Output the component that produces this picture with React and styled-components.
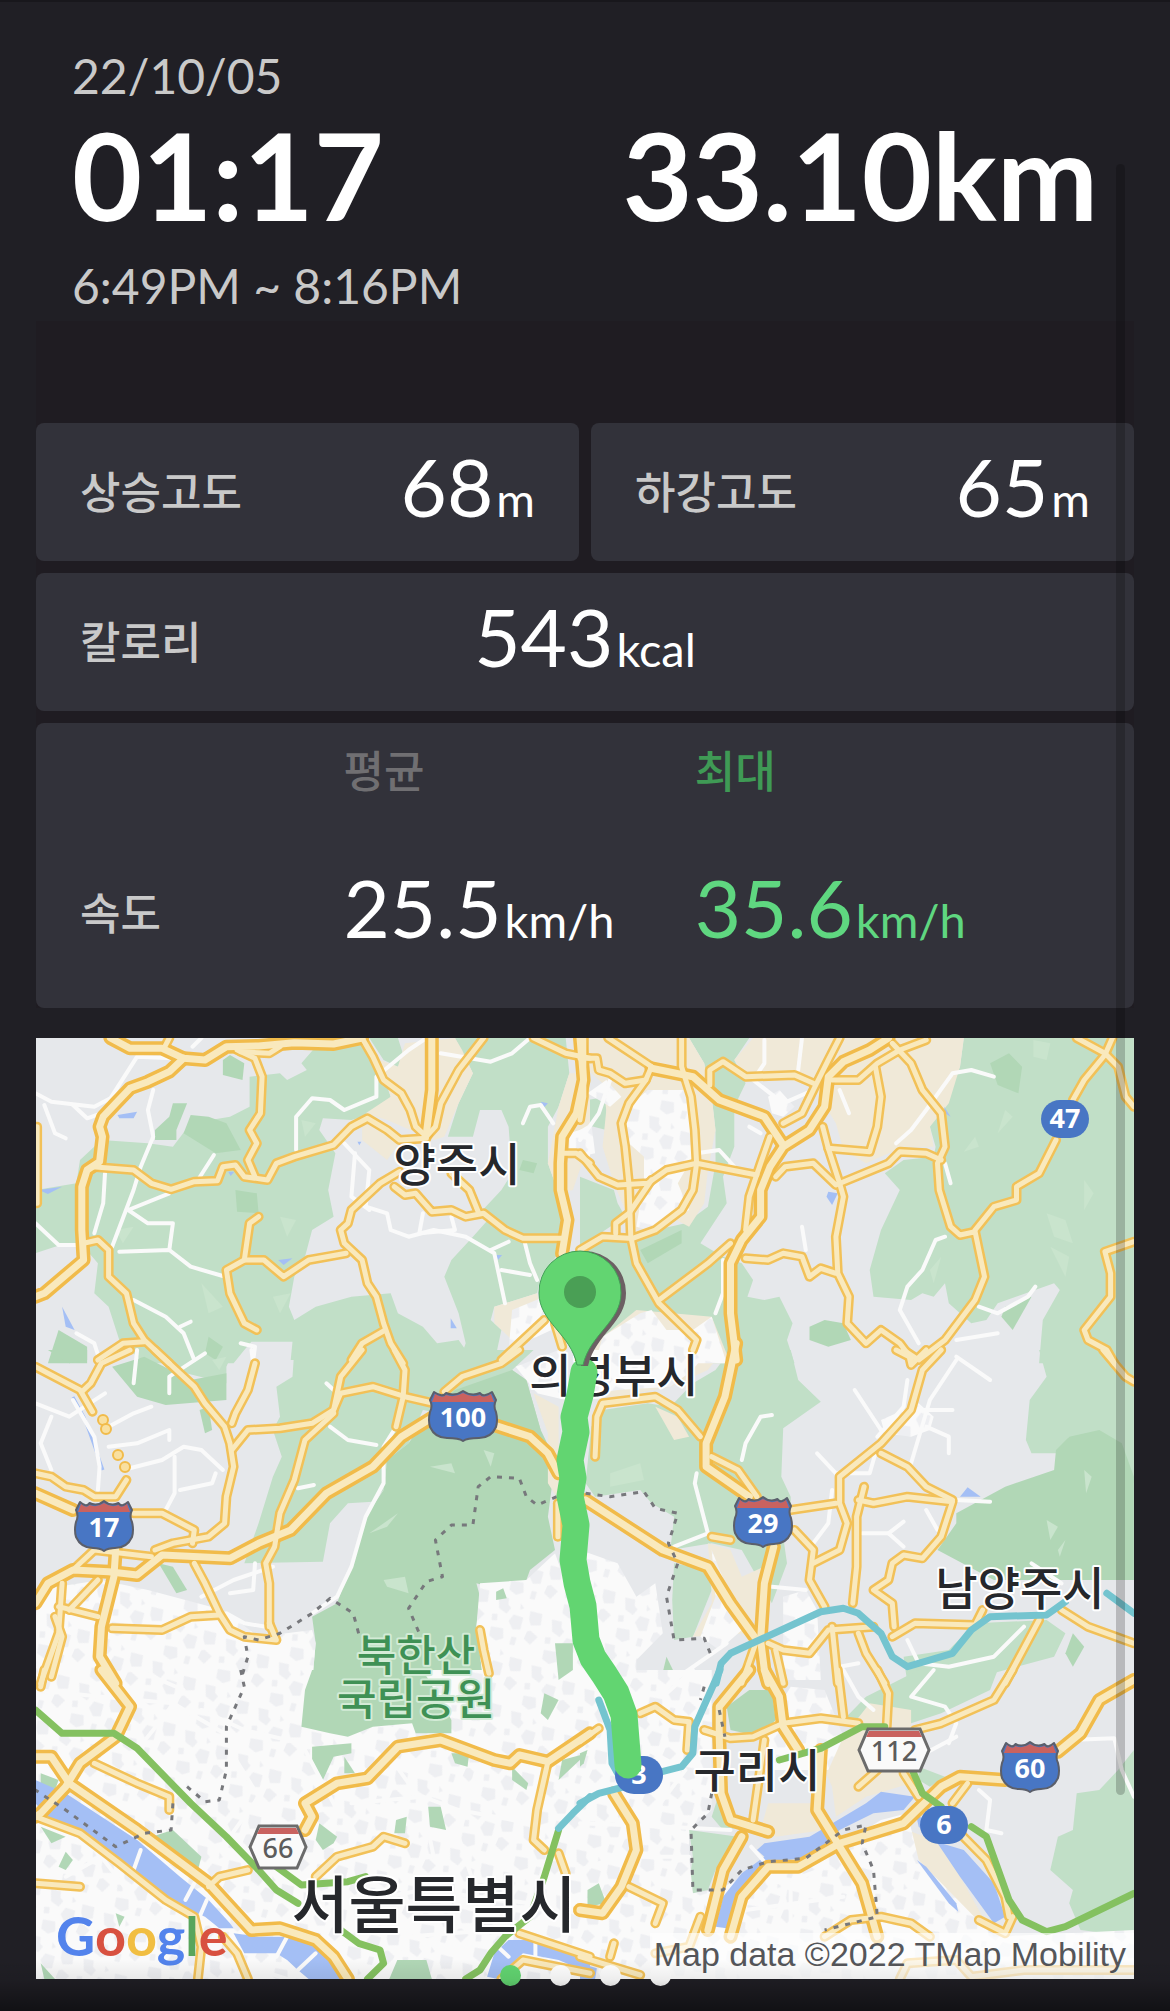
import React from "react";
import styled, { createGlobalStyle } from "styled-components";

const GlobalStyle = createGlobalStyle`
  body {
    margin: 0;
    background: #201f25;
    font-family: "Lato", "Noto Sans CJK KR", sans-serif;
  }
`;

const elevations = [
  { label: "상승고도", value: "68", unit: "m" },
  { label: "하강고도", value: "65", unit: "m" },
];

const pages = [1, 2, 3, 4];

// The map is drawn in six sheets, each with its own origin and scale.
const sheets = {
  nw: [30, 1030, 2.8, 3],
  ne: [580, 1030, 2.6576, 3],
  w: [30, 1350, 2.8, 3],
  e: [580, 1350, 2.6576, 3],
  sw: [30, 1670, 2.8, 3],
  se: [580, 1670, 2.6576, 3],
};

const project = (sheet, points) => {
  const [ox, oy, sx, sy] = sheets[sheet];
  return points
    .split(" ")
    .map((pair) => {
      const [x, y] = pair.split(",");
      return `${(ox + x / sx).toFixed(1)},${(oy + y / sy).toFixed(1)}`;
    })
    .join(" ");
};

const shapes = (layer) =>
  Object.keys(layer).flatMap((sheet) => layer[sheet].map((points) => project(sheet, points)));

const woods = shapes({
  nw: [
    "760,100 800,50 940,40 960,110 1000,170 1010,200 990,230 930,260 900,270 820,265 810,300 855,370 835,480 850,560 790,600 770,680 740,740 725,830 740,870 800,830 900,800 1010,790 1030,850 1100,890 1140,940 1200,930 1220,960 1210,990 730,990 735,935 620,935 600,960 570,1000 400,1000 320,1000 250,930 220,830 180,790 190,700 150,650 100,640 15,670 15,480 130,460 140,390 200,330 330,340 400,350 450,280 560,260 615,230 615,140 700,130 720,150 775,120",
    "950,24 1030,24 1050,90 1030,110 990,90",
    "1190,24 1500,24 1510,130 1480,230 1450,290 1450,400 1480,490 1490,620 1380,620 1290,560 1250,560 1320,480 1350,430 1340,290 1320,240 1260,240 1240,320 1170,320 1200,220 1240,130",
    "1240,620 1290,560 1400,630 1480,640 1480,670 1430,740 1420,790 1300,830 1290,870 1320,900 1300,1000 1200,1000 1220,940 1200,850 1160,740 1180,690",
  ],
  ne: [
    "290,24 450,24 410,90 440,160 410,230 410,350 380,440 390,520 320,640 380,680 430,700 460,750 445,800 490,810 530,800 565,880 550,930 570,1000 0,1000 0,640 80,610 140,640 200,600 280,580 340,530 360,400 360,300 350,200 330,100",
    "0,440 90,480 100,520 120,560 0,650",
    "20,210 70,200 70,300 0,280",
    "1020,24 1472,24 1472,1000 1220,1000 1230,870 1275,780 1260,760 1110,820 1080,870 1040,880 980,820 970,760 940,800 910,790 880,810 780,800 770,720 800,600 850,480 810,430 860,390 940,380 945,350 930,290 960,220 1010,110",
  ],
  w: [
    "740,0 1410,0 1350,60 1390,90 1430,240 1300,220 1100,180 1060,280 1000,330 990,420 960,455 890,460 840,520 820,635 600,640 640,520 680,380 705,320 680,240 700,200 690,110 735,80",
    "320,0 570,0 550,50 550,100 400,60",
  ],
  e: [
    "60,180 180,160 240,170 300,100 360,60 400,0 560,0 580,90 640,155 540,235 535,380 560,440 560,470 540,560 550,640 510,760 480,700 430,600 350,580 240,600 250,500 190,460 160,420 40,440 15,400 30,230",
    "250,640 340,660 350,720 300,860 250,870 245,750",
    "1220,0 1472,0 1472,400 1300,260 1270,310 1200,310 1185,270 1195,150 1240,80",
    "860,920 980,900 1050,820 1240,810 1290,850 1260,920 1000,1000 870,1000",
  ],
  se: [
    "700,150 760,80 900,0 1110,0 1090,60 960,130 880,160 830,110 740,150",
    "290,480 420,500 360,600 340,660 300,670 290,640 300,560",
    "1320,370 1380,360 1430,300 1472,240 1472,800 1330,780 1300,700 1310,660 1250,600 1270,500 1310,480",
    "370,370 390,420 440,470 380,480 350,440",
    "900,290 970,320 930,350 900,330",
  ],
});

const parks = shapes({
  nw: [
    "350,300 390,260 400,220 440,220 410,300 410,330 350,330",
    "450,255 500,260 550,280 590,360 520,370 430,310",
    "540,90 560,75 600,100 595,150 540,135",
    "575,480 635,490 640,550 580,545",
    "80,900 160,950 160,1000 50,1000",
    "500,920 540,950 520,990 490,970",
    "1380,390 1420,400 1410,430 1370,420",
  ],
  ne: [
    "1090,100 1140,70 1175,110 1165,190 1110,165",
    "160,660 270,600 270,640 180,700",
    "610,890 650,870 700,880 720,930 660,950 610,930",
    "1130,830 1200,800 1150,900 1120,860",
  ],
  w: [
    "1430,240 1480,350 1460,420 1450,500 1470,600 1400,660 1390,690 1320,720 1250,700 1260,740 1250,830 1270,1000 790,1000 800,880 790,800 860,760 900,640 920,560 940,500 990,420 1000,330 1060,280 1110,200 1190,120 1350,60 1390,90",
    "230,50 320,20 450,90 550,70 550,150 380,165 300,140",
    "50,0 160,0 160,30 110,40",
    "475,180 500,170 510,240 490,250",
    "360,640 400,650 440,720 410,730",
    "250,700 310,760 270,820 230,830",
  ],
  e: [
    "1300,260 1380,240 1440,280 1472,380 1472,690 1400,690 1100,690 950,600 1000,520 1000,490 1130,410 1260,360 1265,300",
    "1310,850 1340,890 1310,950 1290,910",
    "230,920 260,990 215,990",
  ],
});

const clearings = shapes({
  nw: ["760,270 800,280 770,320", "700,560 745,570 720,620", "480,760 540,830 500,850", "680,800 730,790 700,850", "240,600 290,590 260,640"],
  ne: [
    "1205,30 1250,40 1240,90 1205,80",
    "1130,240 1150,260 1110,310",
    "1050,320 1060,350 1020,365",
    "1240,550 1290,570 1310,640 1260,620",
    "1250,650 1300,680 1290,740",
    "930,720 960,680 940,760",
    "1340,450 1365,490 1340,540",
  ],
  w: [
    "1120,350 1180,340 1190,370",
    "1270,300 1300,310 1290,350",
    "990,690 1050,680 1060,730 1000,710",
    "950,550 1030,490 1000,530",
    "510,30 550,20 530,60",
  ],
  e: ["80,370 160,340 170,390 80,410", "1240,510 1270,530 1250,570", "1340,360 1360,380 1345,430", "1270,600 1290,570 1275,620"],
});

const suburbs = shapes({
  nw: [
    "980,90 1030,110 1050,40 1190,24 1210,60 1240,130 1200,220 1160,320 1130,330 1000,270 940,250 1010,200",
    "1000,390 930,330 930,280 1000,300 1040,330",
    "1510,130 1568,130 1568,330 1520,480 1480,490 1450,400 1480,230",
    "1300,830 1420,790 1430,830 1350,930 1300,880",
  ],
  ne: [
    "0,24 290,24 330,100 350,200 360,300 340,420 330,520 290,590 240,560 150,600 120,540 90,460 60,350 70,240 60,160 0,100",
    "460,24 1020,24 1010,110 980,220 930,290 940,350 860,350 760,400 700,360 680,280 620,170 560,150 450,150 410,90",
    "40,940 150,840 350,860 400,1000 30,1000",
  ],
  w: ["1410,130 1480,170 1480,450 1450,400 1450,250"],
  e: [
    "0,0 380,0 340,60 240,110 100,140 40,140",
    "200,170 260,200 290,260 250,270",
    "340,580 400,600 430,680 510,640 490,760 440,850 300,860 350,760 350,720",
  ],
  se: [
    "700,200 770,100 880,120 880,340 760,380 680,440 670,350 650,300",
    "500,400 640,400 650,480 520,500 480,480",
    "870,480 960,520 1080,760 1000,730 900,570",
  ],
});

const blocks = shapes({
  nw: ["1510,310 1568,290 1568,380 1510,370", "1350,840 1440,800 1460,900 1340,960"],
  ne: [
    "180,180 290,180 300,380 260,460 290,540 180,600 150,590 170,450 170,380 130,340 120,240",
    "60,920 160,850 190,840 230,900 300,900 350,860 390,1000 40,1000",
    "0,300 30,280 40,370 0,380",
    "20,190 70,150 110,200 80,230",
    "500,200 530,180 570,230 540,260 510,250",
  ],
  w: [
    "15,720 200,690 330,720 540,780 640,860 790,840 800,880 790,1000 15,1000",
    "1260,700 1390,690 1470,610 1500,700 1568,880 1568,1000 1270,1000 1250,830",
    "1360,50 1480,0 1500,0 1500,150 1420,130",
  ],
  e: [
    "0,0 340,0 300,60 240,110 100,120 0,140",
    "0,600 100,640 150,740 200,700 220,850 150,930 150,1000 0,1000",
    "350,600 400,740 440,830 370,900 320,860 340,800 360,740",
    "540,740 600,720 630,780 640,990 540,990",
    "800,210 860,180 900,160 940,200 930,240 880,260 810,250",
  ],
  sw: ["15,0 1568,0 1568,927 15,927"],
  se: [
    "0,0 350,0 350,420 290,480 290,560 300,670 360,660 500,590 700,520 800,450 870,430 900,570 1100,800 1472,780 1472,927 0,927",
    "560,50 650,60 700,200 660,300 480,300 480,200",
  ],
});

const cityParks = shapes({
  w: ["1470,880 1520,880 1520,960 1480,990", "1305,725 1325,715 1335,745 1305,750"],
  sw: [
    "790,0 1100,0 1180,150 1180,190 1080,190 1070,160 960,170 890,200 840,190 760,170 770,60",
    "790,230 900,220 900,250 850,260 820,330 790,290",
    "880,260 910,310 880,310",
    "810,460 860,500 850,520 820,540 800,510",
    "1025,450 1055,440 1050,490 1020,490",
    "1115,410 1150,410 1165,480 1120,470",
    "1180,250 1230,250 1225,290 1190,280",
    "1350,290 1395,340 1390,360 1350,330",
    "1490,270 1560,250 1480,330",
    "1440,70 1480,90 1450,150 1430,130",
    "30,310 80,330 70,360 30,340",
    "30,470 100,500 60,520",
    "340,500 400,480 480,560 470,600 400,570",
    "1020,870 1110,870 1125,927 1000,927",
    "100,545 120,570 100,600 80,590",
    "240,730 265,740 250,770",
    "30,880 70,927 40,927",
  ],
  se: [
    "390,110 450,60 510,60 520,150 480,200 400,180",
    "20,660 50,640 70,700 20,710",
    "0,250 20,240 10,280 0,290",
  ],
});

const water = shapes({
  nw: [
    "245,255 300,245 290,265 250,265",
    "90,830 125,900 100,890",
    "695,690 735,685 710,705",
    "25,480 90,470 50,492",
    "1178,865 1195,895 1178,895",
    "1430,215 1450,220 1440,232",
    "1305,675 1322,675 1310,690",
    "555,425 572,425 562,438",
    "917,335 928,335 922,346",
  ],
  ne: ["660,485 685,490 670,525 655,500", "968,230 985,260 970,250"],
  e: ["1010,440 1030,412 1065,440"],
  sw: [
    "15,330 100,370 300,510 420,620 500,690 560,760 570,775 530,775 490,740 380,690 280,600 200,530 120,480 50,440 15,400",
    "570,790 640,800 720,800 780,810 850,870 870,927 780,927 750,900 720,870 690,850 600,850",
    "1340,810 1390,810 1568,870 1568,910 1480,870 1380,850 1310,927 1280,920 1300,850",
  ],
  se: [
    "360,770 380,680 430,610 490,560 470,540 490,520 610,500 700,440 760,400 800,365 890,380 860,420 780,430 690,480 640,540 600,565 500,575 450,640 410,700 390,775",
    "890,420 960,520 1020,540 1100,640 1130,740 1100,760 1010,620 950,520 900,470",
    "895,570 920,590 1000,700 1005,725 980,700",
    "0,880 45,895 40,927 0,927",
  ],
});

const lanes = shapes({
  nw: [
    "15,190 60,215 180,230 225,205 300,80 400,85",
    "40,225 70,310 100,325",
    "120,225 160,265 200,250",
    "345,180 330,240 345,320 310,410 290,480 230,650",
    "210,430 205,520 180,610",
    "390,490 275,540 330,580 400,580 390,660",
    "250,665 390,660 450,710 540,738",
    "15,580 80,645 150,645",
    "290,810 380,860 430,910 460,990",
    "450,875 420,890",
    "745,360 745,260 790,205 840,210 880,240 970,200 970,140 1060,60 1110,24",
    "470,450 515,375",
    "880,340 950,420 940,530 1000,550 1010,600 1060,620 1130,600 1220,620 1300,670 1330,820",
    "910,370 900,500 950,540",
    "1100,550 1090,610 1190,600 1180,560",
    "1150,70 1290,95 1350,70 1400,24",
    "1380,280 1400,230 1430,225 1465,280",
    "1290,660 1340,635",
    "1385,635 1400,700 1420,750",
    "1320,720 1400,735",
    "130,910 180,940 195,990",
    "455,50 480,24",
    "590,940 630,950 625,990",
  ],
  ne: [
    "490,30 490,100 460,150 540,220 620,180",
    "590,24 580,120",
    "1100,140 1040,120 990,130 920,240 880,300 840,340",
    "450,290 480,310",
    "970,620 945,630 910,720 870,770 850,840 900,940",
    "380,690 380,790 360,850",
    "970,400 985,460",
    "590,590 600,660",
    "690,180 715,250",
    "310,370 370,360 410,410",
    "1060,830 1110,850 1190,800 1210,770",
    "1000,930 1110,910",
    "0,330 50,250 80,150",
  ],
  w: [
    "15,160 110,200 210,130",
    "60,200 30,280 60,360",
    "120,150 180,260 195,350 190,420",
    "220,230 290,190 340,170",
    "220,290 300,280 390,240 390,270",
    "260,360 370,330 430,290 480,300 540,360",
    "405,320 405,430 380,480",
    "420,420 510,400 520,370",
    "300,0 290,100",
    "390,130 390,80 490,10",
    "620,0 625,40",
    "830,100 850,120",
    "840,230 890,270 970,285",
    "1025,230 990,290 990,400 940,500 900,650 860,740 790,790",
    "750,415 795,405",
    "480,740 570,690 680,650",
    "630,640 625,720 560,730",
    "550,790 600,820 660,830",
  ],
  e: [
    "510,195 480,200 440,280 430,330",
    "250,590 340,550 305,400 310,370",
    "730,120 800,240",
    "1000,30 930,150 880,340",
    "870,90 860,170 790,260",
    "1000,20 1090,90",
    "920,230 980,260 980,310",
    "910,180 990,180",
    "630,310 680,370 770,370 790,290",
    "670,420 660,520 620,580",
    "750,550 820,550 860,590",
    "820,550 860,515",
    "920,480 950,540",
    "1000,450 1090,455",
    "250,990 390,880",
    "1280,700 1200,640",
    "510,710 600,720",
    "870,870 900,940 980,950 1100,920 1180,830",
    "690,950 740,940",
  ],
  sw: [
    "290,600 310,540",
    "435,690 460,640",
    "475,740 495,690",
    "690,860 720,800",
    "750,900 800,850",
    "1340,860 1310,830",
    "1415,860 1415,820",
    "15,60 200,80 400,100 560,200",
    "300,240 360,160 430,60 300,0",
    "480,120 600,180 760,220 860,420",
    "560,240 640,380 560,500",
    "900,400 1100,380 1200,420 1400,460",
    "1000,250 1100,400 1130,560",
    "1250,300 1200,500 1260,700",
    "900,700 1100,660 1400,700",
    "1000,927 1050,800 1300,780",
    "640,900 720,927",
    "100,620 200,560 300,700",
  ],
  se: [
    "400,480 230,470 0,460",
    "455,530 490,575",
    "700,0 740,80 780,120",
    "940,0 880,80 970,110 1000,160 980,220",
    "1300,210 1420,205 1440,300 1472,380",
    "1060,360 1090,390 1080,480 1120,490",
    "900,260 1000,200",
    "300,0 220,80",
    "0,600 100,560 290,560",
    "440,720 700,680",
    "470,620 540,640 640,600",
    "560,760 560,640",
    "180,240 280,300 200,420",
  ],
});

const roads = shapes({
  nw: [
    "390,24 375,55",
    "175,410 290,420 340,460 395,478 460,455 525,452 540,410 575,405 600,440 665,450 690,400 740,380 850,345 900,290 945,265 1000,300 1035,330 1110,325",
    "580,60 630,85 650,140 645,250 615,300 635,340 610,390 630,440",
    "590,65 670,70 700,50",
    "930,24 960,80 990,150 1040,190 1065,240 1080,290 1110,320",
    "1270,24 1200,120 1150,220 1135,290 1110,320",
    "1410,24 1500,70 1568,85",
    "1490,370 1530,370 1568,400",
    "20,290 20,520",
    "150,640 190,630 220,660 220,740 270,790 290,880 320,930 390,1000",
    "320,935 260,940 190,990",
    "640,560 615,580 600,690 550,720 560,790 600,880 635,900",
    "600,690 655,690 710,740 780,690 885,670",
    "1035,425 980,460 900,540 890,580 870,600 880,640 930,690 945,760 970,800 990,880 1010,940 1045,1000",
    "1020,470 1050,495 1080,490 1125,545 1180,540 1220,560 1270,550 1330,600 1380,625 1490,625",
    "1180,430 1230,480 1255,545",
    "995,900 930,940 900,990",
    "1440,870 1320,990",
    "1470,880 1490,950",
  ],
  ne: [
    "0,85 45,85 50,120 80,130 120,160 175,150 190,110",
    "75,24 190,110",
    "10,24 10,200 0,270",
    "270,24 270,110 295,200 305,300 310,400 300,480 270,540 200,600 140,625",
    "175,150 130,220 110,280 120,350 130,460 135,620 150,700 210,820 310,930 300,960",
    "0,370 50,440 100,465 180,460 230,420 310,400 470,435",
    "190,450 130,550 95,580 95,610",
    "0,660 60,620 130,625",
    "345,165 345,120 380,95 440,140 570,135 620,160",
    "690,24 660,90 620,180 590,250 540,280",
    "505,320 480,400 450,500 440,600",
    "670,150 740,150 790,100 850,60 920,30",
    "785,110 800,200 790,290 770,365 660,355",
    "645,290 660,355 690,460",
    "830,40 880,100 910,180 960,250 970,350 950,400 955,480 985,590 1010,615 1050,605 1075,740 1050,810 970,930 900,990 860,960",
    "520,440 545,410 620,400 680,465 820,400 850,365 920,370 960,390",
    "690,460 700,500 680,620 685,730 715,800 710,880 760,940 800,900 850,940 880,985",
    "440,685 500,690 540,670 590,680 610,740 640,715 680,730",
    "400,640 340,700 210,810",
    "1050,600 1100,530 1160,510 1160,470 1220,430 1265,330",
    "1310,210 1340,150 1395,75 1415,24",
    "1320,24 1395,70 1430,110 1450,200 1472,230",
    "1472,635 1395,665 1410,730 1410,800 1340,900 1350,930 1400,960 1420,1000",
  ],
  w: [
    "15,50 140,120 175,185",
    "280,0 200,40 170,100 145,125",
    "350,0 410,60 460,110 490,160 545,230 560,280 570,350 550,440 545,520 500,560 400,580 350,600",
    "630,40 610,120 575,190 565,220",
    "565,300 610,240 700,235 790,220 850,180 870,80 930,0",
    "850,180 870,130 960,110 1050,140 1130,160",
    "1020,0 1050,60 1045,140 1025,230",
    "850,190 770,270 740,390 700,490 685,590 660,640 670,700 670,830",
    "1370,0 1320,40 1210,80 1160,125",
    "15,370 60,380 100,410 150,420 180,440 240,440 270,390",
    "290,490 370,490 460,540 455,580",
    "120,660 180,600 340,620",
    "460,640 490,700 530,790 560,840 600,860 690,870 670,820",
    "530,795 450,800 370,840 230,835",
    "80,770 190,800",
    "190,690 110,780",
    "90,700 80,850 30,1000",
    "70,800 90,860 60,980",
    "1260,840 1270,900 1285,970",
    "1478,460 1478,560",
  ],
  e: [
    "350,320 420,360 470,440",
    "40,320 45,200 60,160 200,140 260,180 320,260",
    "470,870 430,1000",
    "500,880 540,900 610,910 660,840 780,830",
    "520,900 540,1000",
    "350,560 400,570",
    "560,480 680,460",
    "570,540 620,600 610,690 650,770",
    "960,0 910,60 880,180 800,280 690,380 690,460 710,520 690,600 620,640",
    "755,410 735,500 735,650 725,760",
    "740,450 780,460 870,440 990,455 960,560 910,625 860,615 830,640 820,690 780,720 830,760 835,830",
    "800,310 870,350 920,410 990,450",
    "840,0 875,20 880,45 920,0",
    "670,830 685,1000",
    "740,850 760,910 810,1000",
    "830,860 890,820 1050,825 1070,780",
    "1220,810 1130,1000",
    "1280,780 1350,830 1472,880",
    "1390,0 1450,80 1472,95",
  ],
  sw: [
    "40,0 30,50",
    "15,440 140,490 250,580 380,690 460,740 480,830 470,927",
    "540,800 580,850 610,927",
    "180,280 300,340 390,380 390,420",
    "1450,275 1420,420 1410,510 1440,540",
    "1480,550 1500,610",
    "800,620 860,560 960,530 990,500 1050,520",
    "500,650 530,620 610,600",
    "15,640 140,650",
    "1370,790 1568,860",
    "1320,927 1380,870 1568,910",
  ],
  se: [
    "0,215 50,175",
    "160,130 200,110 250,150 290,155 285,240",
    "130,650 220,700 200,760",
    "330,180 400,205 460,200 540,160 640,145 740,160",
    "490,210 460,450",
    "685,0 700,140",
    "790,0 820,70 815,170",
    "890,180 960,160 1100,90 1150,0",
    "740,350 790,300",
    "860,310 900,380",
    "990,400 1030,340",
    "1010,490 1080,570 1130,680 1140,740",
    "650,800 720,750 800,740 880,760 930,800",
    "1060,750 1130,790 1150,740",
    "320,740 290,830 200,850",
    "0,860 160,915",
    "90,820 80,860",
    "850,927 870,880 1000,870 1040,920 1180,900 1472,900",
  ],
});

const highways = shapes({
  nw: [
    "225,24 280,55 370,55 430,85 490,90 550,50 640,48 740,38 850,42 930,24",
    "430,85 390,125 330,155 280,175 240,220 205,260 195,290 203,320 195,395 160,420 145,470 145,600 150,690 40,790 15,800",
    "1125,24 1125,180 1110,310",
    "1540,24 1550,150 1530,250 1490,320 1485,400 1485,480 1505,570 1490,670",
  ],
  ne: [
    "190,115 300,140 370,210 490,260 540,345",
    "820,24 770,60 700,95 660,140 650,230 610,300 540,350 505,410 480,480 480,560 430,630 400,700 400,850 415,990",
  ],
  w: [
    "15,760 50,700 120,660 220,665 300,675 370,615 560,625 640,580 730,540 830,430 960,350 1040,260 1130,200",
    "1300,225 1400,260 1450,310 1480,370",
    "15,430 120,480",
    "240,600 235,680 200,830 195,920 240,1000",
  ],
  e: [
    "415,-20 385,140 335,280 335,350 450,440",
    "15,450 220,600 340,650 400,760 470,870",
    "515,590 490,700 480,870 490,960 500,1000",
  ],
  sw: [
    "200,0 280,110 240,200 140,280 100,350 30,430 15,440",
    "15,260 60,260 110,340 300,480 500,640 620,780 700,775 800,810 850,860 890,927",
    "770,480 790,440 770,400 860,340 945,325 1030,230 1150,210 1300,270 1345,280 1370,255 1450,275 1568,190",
  ],
  se: [
    "90,370 140,460 150,540 110,650 60,730 0,720",
    "450,0 370,110 370,200 375,370 400,450 500,485",
    "490,0 530,80 540,170 580,240",
    "430,500 380,600 340,780",
    "400,800 430,680 500,590 580,590 690,520 860,460 960,350 1010,320 1130,330",
    "640,240 630,420 690,530 750,640 790,800",
    "1270,245 1330,190 1380,90 1472,30",
  ],
});

const expressways = shapes({
  sw: [
    "15,120 90,190 235,190 300,235 450,400 550,500 640,600 690,660 750,700",
    "690,590 760,645 890,635 940,620",
    "870,780 920,820 980,840 990,880 945,927",
    "1480,480 1440,620 1400,740 1330,800 1290,850 1260,900 1220,927",
  ],
  se: [
    "530,270 640,235 750,170 810,170",
    "885,305 910,370 960,410",
    "1040,470 1080,500 1140,690 1175,750 1240,785 1290,770 1472,670",
  ],
});

const tollways = shapes({
  e: [
    "1400,730 1472,790",
    "1290,755 1240,795 1090,800 1040,840 990,910 870,950 830,920 800,850 740,790 700,775 640,785 400,910 375,940 362,1000",
  ],
  sw: ["1568,380 1520,430 1480,475"],
  se: [
    "372,0 305,170 300,250 270,290 200,310",
    "50,90 80,180 85,280 100,310",
    "120,350 50,370 0,400",
  ],
});

const borders = shapes({
  w: [
    "1475,440 1420,465 1390,440 1370,385 1290,380 1255,410 1240,525 1180,525 1135,570 1155,680 1110,695 1060,775 1090,850",
    "920,850 905,790 840,745 790,790 700,850 640,870 600,860 610,920 590,990",
  ],
  e: ["15,430 80,440 170,425 200,475 260,490 235,580 260,640 230,740 250,870 330,865 350,920"],
  sw: ["590,0 600,50 550,170 550,300 530,390 490,395 440,350", "400,400 395,480 320,490 240,530 100,420 15,360"],
  se: [
    "330,50 320,90",
    "370,120 385,200",
    "350,370 340,430 295,480 300,660 380,660 430,600 500,575 600,565 700,480 760,465 750,520 780,600 790,740 650,780",
  ],
});

const tunnels = ["103,1420", "106,1429", "118,1455", "125,1467"];

const route =
  "584,1372 580,1395 574,1417 576,1432 570,1460 573,1478 570,1496 576,1525 573,1560 577,1583 583,1606 586,1640 593,1658 604,1674 616,1693 624,1715 626,1740 628,1765";

const places = [
  { name: "양주시", x: 457, y: 1181, size: 46 },
  { name: "의정부시", x: 614, y: 1392, size: 46 },
  { name: "남양주시", x: 1020, y: 1605, size: 46 },
  { name: "구리시", x: 757, y: 1787, size: 46 },
  { name: "서울특별시", x: 434, y: 1928, size: 62 },
];

const Lines = ({ lines, color, width, dash }) => (
  <g fill="none" stroke={color} strokeWidth={width} strokeDasharray={dash} strokeLinecap={dash ? "butt" : "round"} strokeLinejoin="round">
    {lines.map((points) => (
      <polyline key={points} points={points} />
    ))}
  </g>
);

const Areas = ({ areas, fill }) => (
  <g fill={fill}>
    {areas.map((points) => (
      <polygon key={points} points={points} />
    ))}
  </g>
);

const OvalShield = ({ x, y, children }) => (
  <g transform={`translate(${x} ${y})`}>
    <rect x="-24" y="-19" width="48" height="38" rx="19" fill="#4876c4" />
    <ShieldText y="9">{children}</ShieldText>
  </g>
);

const CrestShield = ({ x, y, wide, children }) => {
  const w = wide ? 34 : 29;
  return (
    <g transform={`translate(${x} ${y})`} strokeLinejoin="round">
      <path
        d={`M${-w + 5} -24 Q${-w / 2 - 3} -18 ${-w / 2} -23 Q${-w / 4} -19 0 -25 Q${w / 4} -19 ${w / 2} -23 Q${w / 2 + 3} -18 ${w - 5} -24 L${w - 1} -16 Q${w - 4} -10 ${w - 1} -4 Q${w + 1} 4 ${w - 1} 11 Q${w - 6} 22 ${w - 18} 22 Q4 22 0 25 Q-4 22 ${18 - w} 22 Q${6 - w} 22 ${1 - w} 11 Q${-w - 1} 4 ${1 - w} -4 Q${4 - w} -10 ${1 - w} -16 Z`}
        fill="#4876c4"
        stroke="#5b5f6b"
        strokeWidth="2"
      />
      <path
        d={`M${-w + 6} -22 Q${-w / 2 - 3} -17 ${-w / 2} -21 Q${-w / 4} -18 0 -23 Q${w / 4} -18 ${w / 2} -21 Q${w / 2 + 3} -17 ${w - 6} -22 L${w - 3} -14 H${3 - w} Z`}
        fill="#c9625f"
      />
      <ShieldText y="11">{children}</ShieldText>
    </g>
  );
};

const HexShield = ({ x, y, w, children }) => (
  <g transform={`translate(${x} ${y})`}>
    <path d={`M${-w + 9} -21 H${w - 9} L${w} 0 L${w - 9} 21 H${9 - w} L${-w} 0 Z`} fill="#fafafa" stroke="#6b6b6b" strokeWidth="3" />
    <path d={`M${-w + 10} -19 H${w - 10} L${w - 7} -13 H${7 - w} Z`} fill="#c9625f" />
    <ShieldText y="11" $dark>
      {children}
    </ShieldText>
  </g>
);

const CourseMap = () => (
  <MapDrawing viewBox="36 1038 1098 941" role="img" aria-label="주행 경로">
    <defs>
      <pattern id="streets" width="58" height="50" patternUnits="userSpaceOnUse" patternTransform="rotate(24)">
        <rect width="58" height="50" fill="#fafafa" />
        <path
          d="M3 5 L13 3 L15 9 L19 11 L17 18 L8 16 Z M26 3 L31 6 L28 9 Z M38 6 L50 4 L53 15 L44 19 L40 14 Z M24 16 L34 15 L36 27 L29 30 L22 24 Z M4 24 L9 22 L11 28 L6 30 Z M43 26 L46 24 L55 27 L51 37 L43 34 Z M8 36 L20 33 L24 42 L18 47 L10 45 Z M31 37 L36 36 L37 44 L32 45 Z"
          fill="#eeeff2"
        />
      </pattern>
    </defs>
    <rect x="36" y="1038" width="1098" height="941" fill="#e6e8eb" />
    <Areas areas={woods} fill="#c1dfc7" />
    <Areas areas={parks} fill="#b1d7b6" />
    <Areas areas={clearings} fill="#c9e4cd" />
    <Areas areas={suburbs} fill="#f0e9d8" />
    <Areas areas={blocks} fill="url(#streets)" />
    <Areas areas={cityParks} fill="#b1d7b6" />
    <Areas areas={water} fill="#a4bff5" />
    <polyline points="73,1397 84,1417 103,1470" fill="none" stroke="#a4bff5" strokeWidth="3" />
    <Lines lines={lanes} color="#fafafa" width="4" />
    <Lines lines={roads} color="#f2c158" width="10" />
    <Lines lines={highways} color="#f1bb4a" width="14" />
    <Lines lines={roads} color="#f9e9bd" width="5" />
    <Lines lines={highways} color="#f9e9bd" width="7" />
    {tunnels.map((point) => {
      const [cx, cy] = point.split(",");
      return <circle key={point} cx={cx} cy={cy} r="5" fill="#f9e0a0" stroke="#f1bb4a" strokeWidth="2" />;
    })}
    <Lines lines={expressways} color="#84c160" width="7" />
    <Lines lines={tollways} color="#74c4cf" width="7" />
    <Lines lines={borders} color="#77787c" width="3" dash="5 7" />

    <CrestShield x={463} y={1416} wide>100</CrestShield>
    <CrestShield x={104} y={1526}>17</CrestShield>
    <CrestShield x={763} y={1522}>29</CrestShield>
    <CrestShield x={1030} y={1767}>60</CrestShield>
    <HexShield x={894} y={1750} w={35}>112</HexShield>
    <HexShield x={278} y={1847} w={28}>66</HexShield>
    <OvalShield x={1065} y={1119}>47</OvalShield>
    <OvalShield x={944} y={1825}>6</OvalShield>
    <OvalShield x={639} y={1775}>3</OvalShield>

    {places.map((place) => (
      <PlaceName key={place.name} x={place.x} y={place.y} fontSize={place.size}>
        {place.name}
      </PlaceName>
    ))}
    <PlaceName y="1671" fontSize="43" $park>
      <tspan x="416">북한산</tspan>
      <tspan x="416" dy="44">국립공원</tspan>
    </PlaceName>

    <polyline points={route} fill="none" stroke="#62d571" strokeWidth="27" strokeLinecap="round" strokeLinejoin="round" />
    <path
      d="M584 1251 a42 42 0 0 1 42 42 c0 30 -30 40 -38 73 h-7 c-4 -32 -39 -45 -39 -73 a42 42 0 0 1 42 -42 Z"
      fill="#6c5f63"
    />
    <path
      d="M580 1251 a41 41 0 0 1 41 42 c0 29 -31 41 -38 72 h-6 c-6 -31 -38 -43 -38 -72 a41 41 0 0 1 41 -42 Z"
      fill="#62d571"
      stroke="#43a057"
      strokeWidth="1"
    />
    <circle cx="580" cy="1292" r="16" fill="#4a9f55" />

    <GoogleMark x="56" y="1956">
      <tspan fill="#5383ec">G</tspan>
      <tspan fill="#d85140">o</tspan>
      <tspan fill="#f1be42">o</tspan>
      <tspan fill="#5383ec">g</tspan>
      <tspan fill="#58a55c">l</tspan>
      <tspan fill="#d85140">e</tspan>
    </GoogleMark>
  </MapDrawing>
);

const Amount = ({ value, unit, green }) => (
  <Value $green={green}>
    {value}
    <Unit>{unit}</Unit>
  </Value>
);

const App = () => (
  <Screen lang="ko">
    <GlobalStyle />
    <Header>
      <Caption>22/10/05</Caption>
      <Totals>
        <span>01:17</span>
        <span>33.10km</span>
      </Totals>
      <Period>6:49PM ~ 8:16PM</Period>
    </Header>
    <Stats>
      <CardRow>
        {elevations.map((item) => (
          <Card key={item.label}>
            <Label>{item.label}</Label>
            <Amount value={item.value} unit={item.unit} />
          </Card>
        ))}
      </CardRow>
      <CenteredCard>
        <Label>칼로리</Label>
        <Amount value="543" unit="kcal" />
      </CenteredCard>
      <SpeedTable>
        <thead>
          <tr>
            <td />
            <HeadCell scope="col">평균</HeadCell>
            <HeadCell scope="col" $green>
              최대
            </HeadCell>
          </tr>
        </thead>
        <tbody>
          <tr>
            <th scope="row">
              <Label>속도</Label>
            </th>
            <td>
              <Amount value="25.5" unit="km/h" />
            </td>
            <td>
              <Amount value="35.6" unit="km/h" green />
            </td>
          </tr>
        </tbody>
      </SpeedTable>
    </Stats>
    <MapFrame>
      <CourseMap />
      <Attribution>Map data ©2022 TMap Mobility</Attribution>
    </MapFrame>
    <ScrollThumb />
    <Pager>
      {pages.map((page) => (
        <Dot key={page} type="button" aria-label={`${page}페이지`} $active={page === 1} />
      ))}
    </Pager>
    <BottomShade />
  </Screen>
);

const Screen = styled.main`
  position: relative;
  box-sizing: border-box;
  min-height: 100vh;
  padding: 0 36px 32px;
  border-top: 2px solid #18171c;
  background: #201f25;
  color: #fff;
`;

const Header = styled.header`
  padding: 45px 36px 6px;
`;

const Caption = styled.div`
  color: #c9c9c9;
  font-size: 48px;
  line-height: 58px;
`;

const Totals = styled.div`
  display: flex;
  justify-content: space-between;
  font-size: 121px;
  font-weight: 700;
  line-height: 140px;
`;

const Period = styled(Caption)`
  margin-top: 12px;
`;

const Stats = styled.section`
  display: flex;
  flex-direction: column;
  gap: 12px;
  padding-top: 102px;
  background: #1f1c22;
`;

const CardRow = styled.div`
  display: grid;
  grid-template-columns: 1fr 1fr;
  gap: 12px;
`;

const Card = styled.div`
  box-sizing: border-box;
  display: flex;
  align-items: center;
  justify-content: space-between;
  height: 138px;
  padding: 0 44px;
  border-radius: 8px;
  background: #32323a;
`;

const CenteredCard = styled(Card)`
  display: grid;
  grid-template-columns: 1fr auto 1fr;
`;

const Label = styled.span`
  color: #c9c9c9;
  font-size: 44px;
  font-weight: 500;
  line-height: 64px;
`;

const Value = styled.span`
  color: ${({ $green }) => ($green ? "#5fd780" : "#fff")};
  font-size: 80px;
  line-height: 96px;
  white-space: nowrap;
`;

const Unit = styled.small`
  margin-left: 3px;
  font-size: 47px;
`;

const SpeedTable = styled.table`
  display: block;
  padding: 0 88px 0 44px;
  border-radius: 8px;
  background: #32323a;

  tr {
    display: grid;
    grid-template-columns: 3fr 4fr 4fr;
    align-items: center;
  }

  thead tr {
    height: 95px;
  }

  tbody tr {
    height: 190px;
  }

  thead,
  tbody {
    display: block;
  }

  th,
  td {
    padding: 0;
    text-align: left;
  }
`;

const HeadCell = styled.th`
  color: ${({ $green }) => ($green ? "#3f9a55" : "#706f72")};
  font-size: 44px;
  font-weight: 500;
  line-height: 64px;
`;

const MapFrame = styled.div`
  position: relative;
  margin-top: 30px;
`;

const MapDrawing = styled.svg`
  display: block;
  width: 100%;
  height: auto;
`;

const PlaceName = styled.text`
  fill: ${({ $park }) => ($park ? "#3f9155" : "#26282c")};
  stroke: ${({ $park }) => ($park ? "#d3ebd6" : "#fff")};
  stroke-width: 4px;
  stroke-linejoin: round;
  paint-order: stroke;
  font-family: "Noto Sans CJK KR", sans-serif;
  font-weight: 500;
  text-anchor: middle;
`;

const ShieldText = styled.text`
  fill: ${({ $dark }) => ($dark ? "#5c5c5c" : "#fff")};
  font-family: "Noto Sans", sans-serif;
  font-size: 27px;
  font-weight: ${({ $dark }) => ($dark ? 500 : 700)};
  text-anchor: middle;
`;

const GoogleMark = styled.text`
  font-family: "Lato", sans-serif;
  font-size: 54px;
  font-weight: 700;
`;

const Attribution = styled.div`
  position: absolute;
  right: 0;
  bottom: 0;
  padding: 0 8px 4px 4px;
  background: rgba(255, 255, 255, 0.65);
  color: #55565a;
  font-family: "Liberation Sans", sans-serif;
  font-size: 34px;
  line-height: 42px;
`;

const ScrollThumb = styled.div`
  position: absolute;
  top: 162px;
  right: 45px;
  bottom: 216px;
  width: 9px;
  border-radius: 5px;
  background: rgba(0, 0, 0, 0.2);
`;

const Pager = styled.nav`
  position: absolute;
  right: 0;
  bottom: 25px;
  left: 0;
  display: flex;
  justify-content: center;
  gap: 29px;
`;

const Dot = styled.button`
  width: 21px;
  height: 21px;
  padding: 0;
  border: 0;
  border-radius: 50%;
  background: ${({ $active }) => ($active ? "#62d571" : "#fff")};
`;

const BottomShade = styled.div`
  position: absolute;
  right: 0;
  bottom: 0;
  left: 0;
  height: 52px;
  background: linear-gradient(rgba(0, 0, 0, 0), rgba(0, 0, 0, 0.07) 40%, rgba(0, 0, 0, 0.45));
  pointer-events: none;
`;

export default App;
